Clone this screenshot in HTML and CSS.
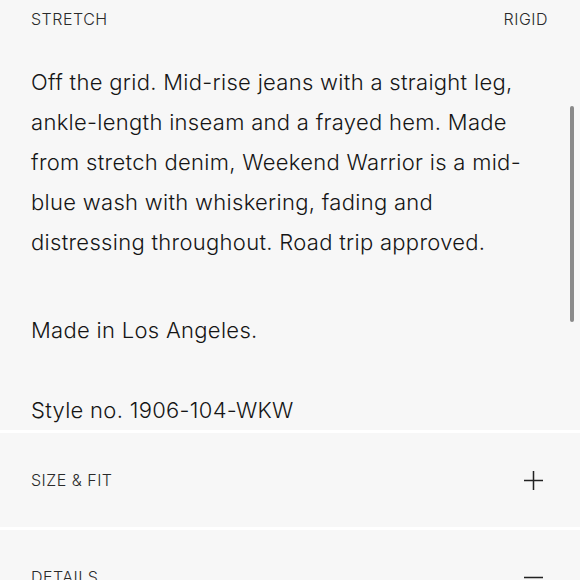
FILE: index.html
```html
<!DOCTYPE html>
<html>
<head>
  <title>Weekend Warrior</title>
  <link rel="stylesheet" href="styles.css">
</head>
<body>
<div class="product-info">
    <div class="stretch-scale">
        <span>STRETCH</span>
        <span>RIGID</span>
    </div>
    <div class="description">
        <p class="intro">Off the grid. Mid-rise jeans with a straight leg, ankle-length inseam and a frayed hem. Made from stretch denim, Weekend Warrior is a mid-blue wash with whiskering, fading and distressing throughout. Road trip approved.</p>
        <p>Made in Los Angeles.</p>
        <p>Style no. 1906-104-WKW</p>
    </div>
    <div class="accordion">
        <div class="accordion-item">
            <span class="accordion-title">SIZE &amp; FIT</span>
            <svg class="toggle" viewBox="0 0 20 20"><path d="M10 0 V20 M0 10 H20" /></svg>
        </div>
        <div class="accordion-item">
            <span class="accordion-title">DETAILS</span>
            <svg class="toggle" viewBox="0 0 20 20"><path d="M0 10 H20" /></svg>
        </div>
    </div>
</div>
<div class="scrollbar"></div>
</body>
</html>
```
FILE: styles.css
```css
html, body {
    margin: 0;
    height: 100%;
    overflow: hidden;
}
body {
    background: #f7f7f7;
    color: #222;
    font-family: Inter, "Liberation Sans", Arial, sans-serif;
}
.stretch-scale {
    display: flex;
    justify-content: space-between;
    padding: 9px 32px 0 31px;
    font-size: 16px;
    font-weight: 300;
    letter-spacing: 0.5px;
    line-height: 20px;
    color: #2a2a2a;
}
.description {
    padding: 33px 45px 0 31px;
    font-size: 22px;
    font-weight: 300;
    line-height: 40px;
    letter-spacing: 0.3px;
    color: #151515;
}
.description p {
    margin: 0 0 40px 0;
}
.description p.intro {
    margin-bottom: 48px;
}
.description p:last-child {
    margin-bottom: 0;
}
.accordion-item {
    display: flex;
    justify-content: space-between;
    align-items: center;
    height: 94px;
    padding: 0 37px 0 31px;
    border-top: 3px solid #fff;
}
.accordion-title {
    font-size: 16px;
    font-weight: 300;
    letter-spacing: 0.5px;
    color: #2a2a2a;
}
.toggle {
    width: 19px;
    height: 19px;
    stroke: #222;
    stroke-width: 1.6;
    fill: none;
}
.scrollbar {
    position: absolute;
    top: 106px;
    right: 6px;
    width: 4px;
    height: 216px;
    border-radius: 2px;
    background: #8a8a8a;
}
```
